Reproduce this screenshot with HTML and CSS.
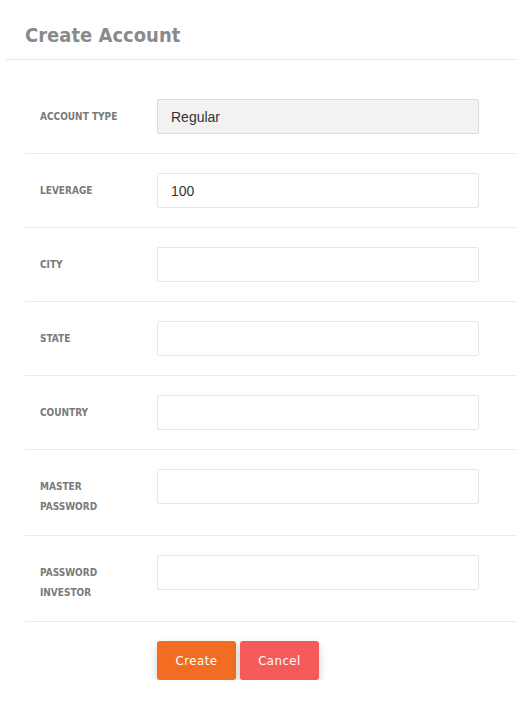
FILE: index.html
```html
<!DOCTYPE html>
<html>
<head>
<meta charset="utf-8">
<link rel="stylesheet" href="styles.css">
</head>
<body>
<div class="page">
  <div class="header"><h1 class="title">Create Account</h1></div>
  <form class="form">
    <div class="row first">
      <label class="label">Account Type</label>
      <input class="input readonly" type="text" value="Regular" readonly>
    </div>
    <div class="row">
      <label class="label">Leverage</label>
      <input class="input" type="text" value="100">
    </div>
    <div class="row">
      <label class="label">City</label>
      <input class="input" type="text">
    </div>
    <div class="row">
      <label class="label">State</label>
      <input class="input" type="text">
    </div>
    <div class="row">
      <label class="label">Country</label>
      <input class="input" type="text">
    </div>
    <div class="row">
      <label class="label">Master<br>Password</label>
      <input class="input" type="password">
    </div>
    <div class="row">
      <label class="label">Password<br>Investor</label>
      <input class="input" type="password">
    </div>
    <div class="actions">
      <button type="button" class="btn btn-create">Create</button>
      <button type="button" class="btn btn-cancel">Cancel</button>
    </div>
  </form>
</div>
</body>
</html>
```
FILE: styles.css
```css
html, body {
  margin: 0;
  padding: 0;
  background: #fff;
}
body {
  font-family: "DejaVu Sans Condensed", "DejaVu Sans", sans-serif;
}
.page {
  padding-left: 6px;
}
.header {
  border-bottom: 1px solid #e6e6e6;
  padding: 23px 0 11px 19px;
}
.title {
  margin: 0;
  font-size: 20px;
  line-height: 25px;
  font-weight: bold;
  color: #8a8a8a;
}
.form {
  margin-left: 19px;
  padding-top: 19px;
}
.row {
  display: flex;
  align-items: flex-start;
  padding: 19px 0 19px;
  border-bottom: 1px solid #ebebeb;
}
.row.first {
  padding-top: 20px;
}
.label {
  width: 117px;
  padding-left: 15px;
  padding-top: 8px;
  margin-bottom: -1px;
  font-size: 10px;
  line-height: 20px;
  font-weight: bold;
  text-transform: uppercase;
  color: #7a7a7a;
}
.input {
  box-sizing: border-box;
  width: 322px;
  height: 35px;
  margin: 0;
  padding: 0 13px;
  border: 1px solid #e6e6e6;
  border-radius: 2px;
  background: #fff;
  font-family: "Liberation Sans", Arial, sans-serif;
  font-size: 14px;
  color: #333;
  outline: none;
}
.input.readonly {
  background: #f2f2f2;
  border-color: #dadada;
}
.actions {
  display: flex;
  gap: 4px;
  padding: 19px 0 0 132px;
}
.btn {
  width: 79px;
  height: 39px;
  border: none;
  border-radius: 3px;
  color: #fff;
  font-family: "DejaVu Sans Condensed", "DejaVu Sans", sans-serif;
  font-size: 13px;
  font-weight: 500;
  letter-spacing: 0.5px;
  box-shadow: 0 4px 10px rgba(0, 0, 0, 0.18);
  cursor: pointer;
}
.btn-create {
  background: #f26d21;
}
.btn-cancel {
  background: #f55a5a;
}
```
